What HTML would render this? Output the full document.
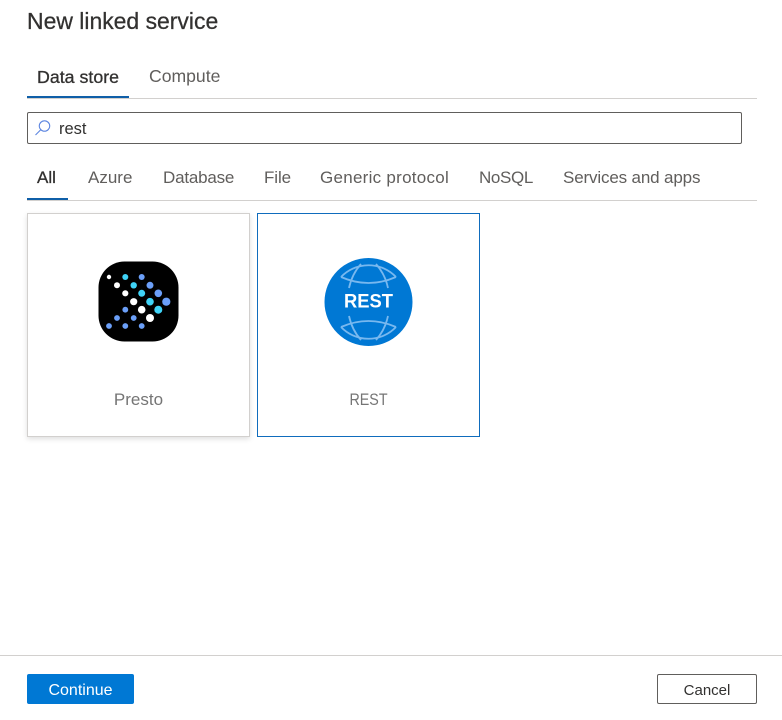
<!DOCTYPE html>
<html><head><meta charset="utf-8">
<style>
html,body{margin:0;padding:0;background:#fff;}
body{position:relative;width:782px;height:720px;overflow:hidden;font-family:"Liberation Sans",sans-serif;color:#605e5c;}
.t{position:absolute;white-space:nowrap;line-height:20px;font-size:17px;}
.b{position:absolute;}
</style></head><body>
<div class="t" style="left:27px;top:9px;font-size:22.95px;line-height:24px;color:#323130;-webkit-text-stroke:.25px #323130;">New linked service</div>

<div class="t" style="left:37px;top:67px;color:#323130;font-size:17.8px;-webkit-text-stroke:.3px #323130;">Data store</div>
<div class="t" style="left:149px;top:66px;font-size:17.6px;">Compute</div>
<div class="b" style="left:27px;top:98px;width:730px;height:1px;background:#d2d0ce;"></div>
<div class="b" style="left:27px;top:96px;width:102px;height:2px;background:#0f5fa8;"></div>

<div class="b" style="left:27px;top:112px;width:713px;height:30px;border:1px solid #605e5c;border-radius:2px;"></div>
<svg class="b" style="left:34px;top:119px;" width="18" height="18" viewBox="0 0 18 18" fill="none" stroke="#5c85e0" stroke-width="1.1"><circle cx="10.5" cy="7" r="5.2"/><path d="M7 10.5L1.5 16"/></svg>
<div class="t" style="left:59px;top:119px;font-size:16.5px;color:#323130;">rest</div>

<div class="t" style="left:37px;top:168px;color:#323130;-webkit-text-stroke:.3px #323130;">All</div>
<div class="t" style="left:88px;top:168px;">Azure</div>
<div class="t" style="left:163px;top:168px;letter-spacing:-.2px;">Database</div>
<div class="t" style="left:264px;top:168px;letter-spacing:-.1px;">File</div>
<div class="t" style="left:320px;top:168px;letter-spacing:.27px;">Generic protocol</div>
<div class="t" style="left:479px;top:168px;letter-spacing:-.35px;">NoSQL</div>
<div class="t" style="left:563px;top:168px;letter-spacing:-.15px;">Services and apps</div>
<div class="b" style="left:27px;top:200px;width:730px;height:1px;background:#d2d0ce;"></div>
<div class="b" style="left:27px;top:198px;width:41px;height:2px;background:#0f5fa8;"></div>

<div class="b" style="left:27px;top:213px;width:221px;height:222px;border:1px solid #d2d0ce;box-shadow:0 2px 5px rgba(0,0,0,.13);"></div>
<div class="b" style="left:257px;top:213px;width:221px;height:222px;border:1px solid #0f6cbd;"></div>

<svg class="b" style="left:0;top:0;" width="782" height="720" viewBox="0 0 782 720">
<rect x="98.5" y="261.5" width="80" height="80" rx="26" fill="#000"/>
<g fill="#fff">
<circle cx="109" cy="277" r="2.2"/><circle cx="117" cy="285.3" r="3"/><circle cx="125.3" cy="293.3" r="3.1"/><circle cx="133.7" cy="301.7" r="3.6"/><circle cx="141.7" cy="309.7" r="3.8"/><circle cx="150" cy="318" r="4"/>
</g>
<g fill="#3fd3f7">
<circle cx="125.3" cy="277" r="3"/><circle cx="133.7" cy="285.3" r="3.2"/><circle cx="141.7" cy="293.3" r="3.5"/><circle cx="150" cy="301.7" r="3.8"/><circle cx="158.3" cy="309.7" r="4"/>
</g>
<g fill="#6b9ff8">
<circle cx="141.7" cy="277" r="3"/><circle cx="150" cy="285.3" r="3.5"/><circle cx="158.3" cy="293.3" r="3.8"/><circle cx="166.3" cy="301.7" r="4.1"/>
<circle cx="125.3" cy="309.7" r="2.9"/><circle cx="117" cy="318" r="2.9"/><circle cx="133.7" cy="318" r="2.9"/><circle cx="109" cy="326" r="2.9"/><circle cx="125.3" cy="326" r="2.9"/><circle cx="141.7" cy="326" r="2.9"/>
</g>

<circle cx="368.5" cy="302" r="44" fill="#0078d4"/>
<g fill="none" stroke="#78b8ef" stroke-width="1.8">
<path d="M341 277A38 38 0 0 1 396 277"/>
<path d="M341 277Q368.5 289 396 277"/>
<path d="M341 327A38 38 0 0 0 396 327"/>
<path d="M341 327Q368.5 315 396 327"/>
<path d="M361 264Q352 274 349 288"/>
<path d="M376 264Q385 274 388 288"/>
<path d="M361 340Q352 330 349 316"/>
<path d="M376 340Q385 330 388 316"/>
</g>
<text x="368.5" y="307.5" text-anchor="middle" font-family="Liberation Sans, sans-serif" font-size="19" font-weight="700" fill="#fff" textLength="49" lengthAdjust="spacingAndGlyphs">REST</text>
</svg>

<div class="t" style="left:27px;width:223px;text-align:center;top:390px;color:#757575;">Presto</div>
<div class="t" style="left:257px;width:223px;text-align:center;top:390px;color:#757575;transform:scaleX(.84);">REST</div>

<div class="b" style="left:0;top:655px;width:782px;height:1px;background:#d2d0ce;"></div>
<div class="b" style="left:27px;top:674px;width:107px;height:30px;background:#0078d4;border-radius:2px;"></div>
<div class="t" style="left:27px;width:107px;text-align:center;top:681px;font-size:16px;color:#fff;">Continue</div>
<div class="b" style="left:657px;top:674px;width:98px;height:28px;border:1px solid #605e5c;border-radius:2px;"></div>
<div class="t" style="left:657px;width:100px;text-align:center;top:681px;font-size:15px;color:#323130;">Cancel</div>
</body></html>
